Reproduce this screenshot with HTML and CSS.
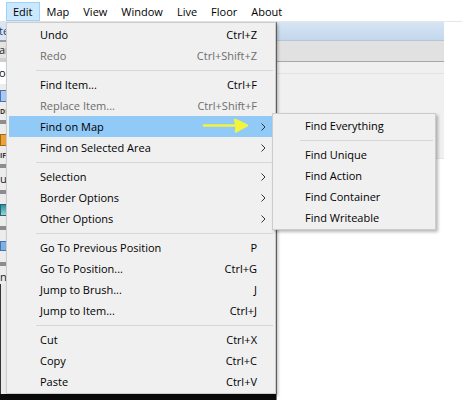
FILE: index.html
```html
<!DOCTYPE html>
<html>
<head>
<meta charset="utf-8">
<link rel="stylesheet" href="styles.css">
</head>
<body>
<div class="screen">
  <div class="menubar">
    <span class="mb-item active">Edit</span>
    <span class="mb-item">Map</span>
    <span class="mb-item">View</span>
    <span class="mb-item">Window</span>
    <span class="mb-item">Live</span>
    <span class="mb-item">Floor</span>
    <span class="mb-item">About</span>
  </div>

  <div class="workspace">
    <div class="leftcol">
      <div class="under">
        <div class="strip">
          <div class="frag f-te">te</div>
          <div class="frag f-ai">ai</div>
          <div class="frag f-ol">ol</div>
          <div class="frag f-icon blue"><span></span></div>
          <div class="frag f-tiny">DE</div>
          <div class="frag f-rule"></div>
          <div class="frag f-icon orange"><span></span></div>
          <div class="frag f-tiny">IF</div>
          <div class="frag f-rule"></div>
          <div class="frag f-us">us</div>
          <div class="frag f-rule"></div>
          <div class="frag f-icon teal"><span></span></div>
          <div class="frag f-rule"></div>
          <div class="frag f-icon small"><span></span></div>
          <div class="frag f-rule"></div>
          <div class="frag f-us">ni</div>
          <div class="frag f-rest"></div>
        </div>
      </div>
      <div class="blackband"></div>
    </div>
    <div class="pane">
      <div class="p-title"></div>
      <div class="p-tabs"></div>
      <div class="p-bar"></div>
      <div class="p-body"></div>
      <div class="p-canvas"></div>
    </div>
    <div class="rest"></div>
  </div>

  <div class="menu main">
    <div class="item"><span class="label">Undo</span><span class="key">Ctrl+Z</span></div>
    <div class="item disabled"><span class="label">Redo</span><span class="key">Ctrl+Shift+Z</span></div>
    <div class="sep"></div>
    <div class="item"><span class="label">Find Item...</span><span class="key">Ctrl+F</span></div>
    <div class="item disabled"><span class="label">Replace Item...</span><span class="key">Ctrl+Shift+F</span></div>
    <div class="item hover"><span class="label">Find on Map</span><span class="key"></span><svg class="chev" width="5" height="8" viewBox="0 0 5 8"><polyline points="0.5,0.5 4,4 0.5,7.5"/></svg></div>
    <div class="item"><span class="label">Find on Selected Area</span><span class="key"></span><svg class="chev" width="5" height="8" viewBox="0 0 5 8"><polyline points="0.5,0.5 4,4 0.5,7.5"/></svg></div>
    <div class="sep"></div>
    <div class="item"><span class="label">Selection</span><span class="key"></span><svg class="chev" width="5" height="8" viewBox="0 0 5 8"><polyline points="0.5,0.5 4,4 0.5,7.5"/></svg></div>
    <div class="item"><span class="label">Border Options</span><span class="key"></span><svg class="chev" width="5" height="8" viewBox="0 0 5 8"><polyline points="0.5,0.5 4,4 0.5,7.5"/></svg></div>
    <div class="item"><span class="label">Other Options</span><span class="key"></span><svg class="chev" width="5" height="8" viewBox="0 0 5 8"><polyline points="0.5,0.5 4,4 0.5,7.5"/></svg></div>
    <div class="sep"></div>
    <div class="item"><span class="label">Go To Previous Position</span><span class="key">P</span></div>
    <div class="item"><span class="label">Go To Position...</span><span class="key">Ctrl+G</span></div>
    <div class="item"><span class="label">Jump to Brush...</span><span class="key">J</span></div>
    <div class="item"><span class="label">Jump to Item...</span><span class="key">Ctrl+J</span></div>
    <div class="sep"></div>
    <div class="item"><span class="label">Cut</span><span class="key">Ctrl+X</span></div>
    <div class="item"><span class="label">Copy</span><span class="key">Ctrl+C</span></div>
    <div class="item"><span class="label">Paste</span><span class="key">Ctrl+V</span></div>
  </div>

  <div class="menu sub">
    <div class="item"><span class="label">Find Everything</span></div>
    <div class="sep"></div>
    <div class="item"><span class="label">Find Unique</span></div>
    <div class="item"><span class="label">Find Action</span></div>
    <div class="item"><span class="label">Find Container</span></div>
    <div class="item"><span class="label">Find Writeable</span></div>
  </div>

  <svg class="pointer" width="52" height="20" viewBox="0 0 52 20">
    <path d="M4 9.5 H44" />
    <path d="M35 4 Q41 6.5 47 9.5 Q41 12.5 36 15.5 Q37.5 9.5 35 4 Z" class="head"/>
  </svg>
</div>
</body>
</html>
```

FILE: styles.css
```css
html, body {
  margin: 0;
  padding: 0;
}
body {
  width: 462px;
  height: 400px;
  overflow: hidden;
  background: #ffffff;
  font-family: "Open Sans", "Noto Sans", "Liberation Sans", sans-serif;
  font-size: 11px;
  color: #000;
}
.screen {
  position: relative;
  width: 462px;
  height: 400px;
}

/* menu bar */
.menubar {
  height: 22px;
  box-sizing: border-box;
  display: flex;
  align-items: flex-start;
  padding: 2px 0 0 6px;
  background: #ffffff;
  border-bottom: 1px solid #e6e6e6;
}
.mb-item {
  box-sizing: border-box;
  height: 19px;
  line-height: 17px;
  padding: 0 6px;
  border: 1px solid transparent;
}
.mb-item.active {
  background: #cce8ff;
  border-color: #99d1ff;
}

/* background workspace */
.workspace {
  display: flex;
  height: 378px;
}
.leftcol {
  width: 276px;
  display: flex;
  flex-direction: column;
}
.under {
  flex: 1;
  background: #f0f0f0;
}
.blackband {
  height: 6px;
  background: #0a0a0a;
}
.strip {
  width: 30px;
  height: 100%;
  display: flex;
  flex-direction: column;
  background: #ececec;
}
.frag {
  white-space: nowrap;
  font-size: 11px;
  padding-left: 0;
}
.f-te {
  height: 18px;
  line-height: 17px;
  background: #dbe6f3;
  color: #1c3f6e;
  text-indent: -1px;
  border-bottom: 2px solid #9a9a9a;
}
.f-ai {
  height: 16px;
  line-height: 15px;
  background: #e4e4e4;
  color: #222;
  text-indent: -1px;
  border-bottom: 4px solid #cfcfcf;
}
.f-ol {
  height: 22px;
  line-height: 22px;
  background: #ffffff;
  color: #111;
  text-indent: -1px;
}
.f-icon {
  height: 24px;
  display: flex;
  align-items: center;
}
.f-icon span {
  display: block;
  width: 14px;
  height: 12px;
  box-sizing: border-box;
  border: 1px solid #4a72b0;
}
.f-icon.blue span { background: #a9c9f2; }
.f-icon.orange span { background: #e9a33a; border-color: #a56814; }
.f-icon.teal span { background: linear-gradient(#2d8fa0, #9cd2d8); border-color: #2a6670; }
.f-icon.small span { background: #7fb1e0; height: 10px; }
.f-tiny {
  height: 8px;
  line-height: 8px;
  font-size: 7px;
  font-weight: bold;
  color: #333;
}
.f-rule {
  height: 4px;
  margin: 4px 0;
  background: #8d8d8d;
}
.f-us {
  height: 14px;
  line-height: 14px;
  color: #222;
}
.f-rest {
  flex: 1;
  background: #e9e9e9;
  border-left: 1px solid #333;
}

.pane {
  width: 167px;
  border-left: 1px solid #7a7a7a;
  display: flex;
  flex-direction: column;
}
.p-title {
  height: 18px;
  background: linear-gradient(#d7e5f4, #c3d7ec);
  border-bottom: 1px solid #b5c6d8;
}
.p-tabs {
  height: 20px;
  background: #e1e1e1;
  border-bottom: 1px solid #a8a8a8;
}
.p-bar {
  height: 11px;
  background: #f0f0f0;
  border-bottom: 1px solid #e2e2e2;
}
.p-body {
  height: 84px;
  background: #f0f0f0;
  border-bottom: 1px solid #e6e6e6;
}
.p-canvas {
  flex: 1;
  background: #ffffff;
}
.rest {
  flex: 1;
  background: #ffffff;
}

/* dropdown menus */
.menu {
  position: absolute;
  box-sizing: border-box;
  background: #f0f0f0;
  border: 1px solid #cccccc;
  padding: 1px 0;
  box-shadow: 2px 2px 3px rgba(0, 0, 0, 0.28);
}
.menu.main {
  left: 6px;
  top: 22px;
  width: 270px;
}
.menu.sub {
  left: 272px;
  top: 113px;
  width: 164px;
}
.item {
  height: 21px;
  margin: 0 2px;
  display: grid;
  grid-template-columns: 1fr auto 16px;
  align-items: center;
  padding-left: 31px;
  white-space: nowrap;
}
.sub .item {
  padding-left: 30px;
  grid-template-columns: 1fr;
}
.item.hover {
  background: #91c9f7;
}
.item.disabled {
  color: #6d6d6d;
}
.key {
  text-align: right;
}
.chev {
  margin-left: 4px;
}
.chev polyline {
  fill: none;
  stroke: #333333;
  stroke-width: 1;
}
.sep {
  height: 8px;
  display: flex;
  align-items: center;
  margin: 0 2px 0 29px;
}
.sep::before {
  content: "";
  flex: 1;
  height: 1px;
  background: #d7d7d7;
}
.sub .sep {
  margin-left: 27px;
}

/* yellow annotation arrow */
.pointer {
  position: absolute;
  left: 200px;
  top: 116px;
}
.pointer path {
  fill: none;
  stroke: #f4f43c;
  stroke-width: 2.5;
  stroke-linecap: round;
  stroke-linejoin: round;
}
.pointer path.head {
  fill: #f4f43c;
}
```
